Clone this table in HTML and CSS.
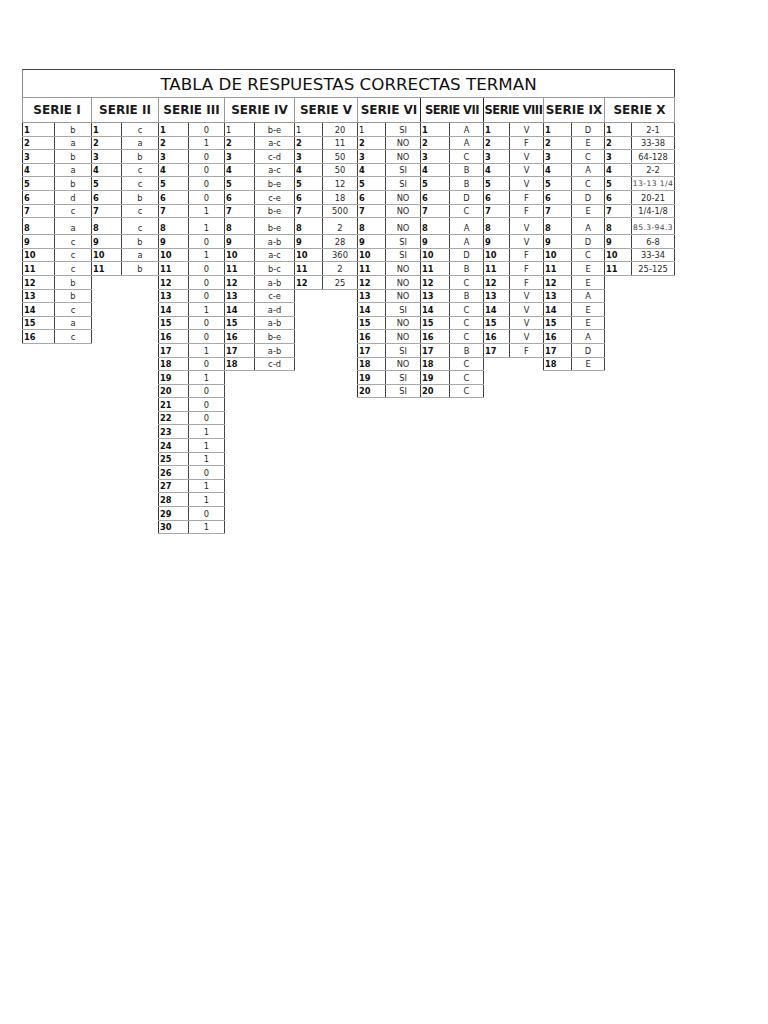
FILE: index.html
```html
<!DOCTYPE html>
<html lang="es">
<head>
<meta charset="utf-8">
<title>Tabla de respuestas correctas Terman</title>
<link rel="stylesheet" href="styles.css">
</head>
<body>
<table class="sheet">
<colgroup>
<col class="w32"><col class="w37">
<col class="w30"><col class="w37">
<col class="w30"><col class="w36">
<col class="w30"><col class="w40">
<col class="w28"><col class="w35">
<col class="w28"><col class="w35">
<col class="w29"><col class="w34">
<col class="w26"><col class="w34">
<col class="w28"><col class="w33">
<col class="w27"><col class="w43">
</colgroup>
<tr><td class="title" colspan="20">TABLA DE RESPUESTAS CORRECTAS TERMAN</td></tr>
<tr class="hd">
<th colspan="2">SERIE I</th><th colspan="2">SERIE II</th><th colspan="2">SERIE III</th><th colspan="2">SERIE IV</th><th colspan="2">SERIE V</th><th colspan="2" class="dk">SERIE VI</th><th colspan="2" class="dk tight">SERIE VII</th><th colspan="2" class="tight">SERIE VIII</th><th colspan="2">SERIE IX</th><th colspan="2">SERIE X</th>
</tr>
<tr class="r"><td class="n">1</td><td class="v">b</td><td class="n">1</td><td class="v">c</td><td class="n">1</td><td class="v">0</td><td class="n l">1</td><td class="v">b-e</td><td class="n l">1</td><td class="v">20</td><td class="n l">1</td><td class="v">SI</td><td class="n">1</td><td class="v">A</td><td class="n">1</td><td class="v">V</td><td class="n">1</td><td class="v">D</td><td class="n">1</td><td class="v">2-1</td></tr>
<tr class="r"><td class="n">2</td><td class="v">a</td><td class="n">2</td><td class="v">a</td><td class="n">2</td><td class="v">1</td><td class="n">2</td><td class="v">a-c</td><td class="n">2</td><td class="v">11</td><td class="n">2</td><td class="v">NO</td><td class="n">2</td><td class="v">A</td><td class="n">2</td><td class="v">F</td><td class="n">2</td><td class="v">E</td><td class="n">2</td><td class="v">33-38</td></tr>
<tr class="r"><td class="n">3</td><td class="v">b</td><td class="n">3</td><td class="v">b</td><td class="n">3</td><td class="v">0</td><td class="n">3</td><td class="v">c-d</td><td class="n">3</td><td class="v">50</td><td class="n">3</td><td class="v">NO</td><td class="n">3</td><td class="v">C</td><td class="n">3</td><td class="v">V</td><td class="n">3</td><td class="v">C</td><td class="n">3</td><td class="v">64-128</td></tr>
<tr class="r"><td class="n">4</td><td class="v">a</td><td class="n">4</td><td class="v">c</td><td class="n">4</td><td class="v">0</td><td class="n">4</td><td class="v">a-c</td><td class="n">4</td><td class="v">50</td><td class="n">4</td><td class="v">SI</td><td class="n">4</td><td class="v">B</td><td class="n">4</td><td class="v">V</td><td class="n">4</td><td class="v">A</td><td class="n">4</td><td class="v">2-2</td></tr>
<tr class="r"><td class="n">5</td><td class="v">b</td><td class="n">5</td><td class="v">c</td><td class="n">5</td><td class="v">0</td><td class="n">5</td><td class="v">b-e</td><td class="n">5</td><td class="v">12</td><td class="n">5</td><td class="v">SI</td><td class="n">5</td><td class="v">B</td><td class="n">5</td><td class="v">V</td><td class="n">5</td><td class="v">C</td><td class="n">5</td><td class="v sm">13-13 1/4</td></tr>
<tr class="r"><td class="n">6</td><td class="v">d</td><td class="n">6</td><td class="v">b</td><td class="n">6</td><td class="v">0</td><td class="n">6</td><td class="v">c-e</td><td class="n">6</td><td class="v">18</td><td class="n">6</td><td class="v">NO</td><td class="n">6</td><td class="v">D</td><td class="n">6</td><td class="v">F</td><td class="n">6</td><td class="v">D</td><td class="n">6</td><td class="v">20-21</td></tr>
<tr class="r"><td class="n">7</td><td class="v">c</td><td class="n">7</td><td class="v">c</td><td class="n">7</td><td class="v">1</td><td class="n">7</td><td class="v">b-e</td><td class="n">7</td><td class="v">500</td><td class="n">7</td><td class="v">NO</td><td class="n">7</td><td class="v">C</td><td class="n">7</td><td class="v">F</td><td class="n">7</td><td class="v">E</td><td class="n">7</td><td class="v">1/4-1/8</td></tr>
<tr class="r tall"><td class="n">8</td><td class="v">a</td><td class="n">8</td><td class="v">c</td><td class="n">8</td><td class="v">1</td><td class="n">8</td><td class="v">b-e</td><td class="n">8</td><td class="v">2</td><td class="n">8</td><td class="v">NO</td><td class="n">8</td><td class="v">A</td><td class="n">8</td><td class="v">V</td><td class="n">8</td><td class="v">A</td><td class="n">8</td><td class="v sm">85.3-94.3</td></tr>
<tr class="r"><td class="n">9</td><td class="v">c</td><td class="n">9</td><td class="v">b</td><td class="n">9</td><td class="v">0</td><td class="n">9</td><td class="v">a-b</td><td class="n">9</td><td class="v">28</td><td class="n">9</td><td class="v">SI</td><td class="n">9</td><td class="v">A</td><td class="n">9</td><td class="v">V</td><td class="n">9</td><td class="v">D</td><td class="n">9</td><td class="v">6-8</td></tr>
<tr class="r"><td class="n">10</td><td class="v">c</td><td class="n">10</td><td class="v">a</td><td class="n">10</td><td class="v">1</td><td class="n">10</td><td class="v">a-c</td><td class="n">10</td><td class="v">360</td><td class="n">10</td><td class="v">SI</td><td class="n">10</td><td class="v">D</td><td class="n">10</td><td class="v">F</td><td class="n">10</td><td class="v">C</td><td class="n">10</td><td class="v">33-34</td></tr>
<tr class="r"><td class="n">11</td><td class="v">c</td><td class="n">11</td><td class="v">b</td><td class="n">11</td><td class="v">0</td><td class="n">11</td><td class="v">b-c</td><td class="n">11</td><td class="v">2</td><td class="n">11</td><td class="v">NO</td><td class="n">11</td><td class="v">B</td><td class="n">11</td><td class="v">F</td><td class="n">11</td><td class="v">E</td><td class="n">11</td><td class="v">25-125</td></tr>
<tr class="r"><td class="n">12</td><td class="v">b</td><td colspan="2"></td><td class="n">12</td><td class="v">0</td><td class="n">12</td><td class="v">a-b</td><td class="n">12</td><td class="v">25</td><td class="n">12</td><td class="v">NO</td><td class="n">12</td><td class="v">C</td><td class="n">12</td><td class="v">F</td><td class="n">12</td><td class="v">E</td><td colspan="2"></td></tr>
<tr class="r"><td class="n">13</td><td class="v">b</td><td colspan="2"></td><td class="n">13</td><td class="v">0</td><td class="n">13</td><td class="v">c-e</td><td colspan="2"></td><td class="n">13</td><td class="v">NO</td><td class="n">13</td><td class="v">B</td><td class="n">13</td><td class="v">V</td><td class="n">13</td><td class="v">A</td><td colspan="2"></td></tr>
<tr class="r"><td class="n">14</td><td class="v">c</td><td colspan="2"></td><td class="n">14</td><td class="v">1</td><td class="n">14</td><td class="v">a-d</td><td colspan="2"></td><td class="n">14</td><td class="v">SI</td><td class="n">14</td><td class="v">C</td><td class="n">14</td><td class="v">V</td><td class="n">14</td><td class="v">E</td><td colspan="2"></td></tr>
<tr class="r"><td class="n">15</td><td class="v">a</td><td colspan="2"></td><td class="n">15</td><td class="v">0</td><td class="n">15</td><td class="v">a-b</td><td colspan="2"></td><td class="n">15</td><td class="v">NO</td><td class="n">15</td><td class="v">C</td><td class="n">15</td><td class="v">V</td><td class="n">15</td><td class="v">E</td><td colspan="2"></td></tr>
<tr class="r"><td class="n">16</td><td class="v">c</td><td colspan="2"></td><td class="n">16</td><td class="v">0</td><td class="n">16</td><td class="v">b-e</td><td colspan="2"></td><td class="n">16</td><td class="v">NO</td><td class="n">16</td><td class="v">C</td><td class="n">16</td><td class="v">V</td><td class="n">16</td><td class="v">A</td><td colspan="2"></td></tr>
<tr class="r"><td colspan="4"></td><td class="n">17</td><td class="v">1</td><td class="n">17</td><td class="v">a-b</td><td colspan="2"></td><td class="n">17</td><td class="v">SI</td><td class="n">17</td><td class="v">B</td><td class="n">17</td><td class="v">F</td><td class="n">17</td><td class="v">D</td><td colspan="2"></td></tr>
<tr class="r"><td colspan="4"></td><td class="n">18</td><td class="v">0</td><td class="n">18</td><td class="v">c-d</td><td colspan="2"></td><td class="n">18</td><td class="v">NO</td><td class="n">18</td><td class="v">C</td><td colspan="2"></td><td class="n">18</td><td class="v">E</td><td colspan="2"></td></tr>
<tr class="r"><td colspan="4"></td><td class="n">19</td><td class="v">1</td><td colspan="4"></td><td class="n">19</td><td class="v">SI</td><td class="n">19</td><td class="v">C</td><td colspan="6"></td></tr>
<tr class="r"><td colspan="4"></td><td class="n">20</td><td class="v">0</td><td colspan="4"></td><td class="n">20</td><td class="v">SI</td><td class="n">20</td><td class="v">C</td><td colspan="6"></td></tr>
<tr class="r"><td colspan="4"></td><td class="n">21</td><td class="v">0</td><td colspan="14"></td></tr>
<tr class="r"><td colspan="4"></td><td class="n">22</td><td class="v">0</td><td colspan="14"></td></tr>
<tr class="r"><td colspan="4"></td><td class="n">23</td><td class="v">1</td><td colspan="14"></td></tr>
<tr class="r"><td colspan="4"></td><td class="n">24</td><td class="v">1</td><td colspan="14"></td></tr>
<tr class="r"><td colspan="4"></td><td class="n">25</td><td class="v">1</td><td colspan="14"></td></tr>
<tr class="r"><td colspan="4"></td><td class="n">26</td><td class="v">0</td><td colspan="14"></td></tr>
<tr class="r"><td colspan="4"></td><td class="n">27</td><td class="v">1</td><td colspan="14"></td></tr>
<tr class="r"><td colspan="4"></td><td class="n">28</td><td class="v">1</td><td colspan="14"></td></tr>
<tr class="r"><td colspan="4"></td><td class="n">29</td><td class="v">0</td><td colspan="14"></td></tr>
<tr class="r"><td colspan="4"></td><td class="n">30</td><td class="v">1</td><td colspan="14"></td></tr>
</table>
</body>
</html>
```

FILE: styles.css
```css
html, body {
  margin: 0;
  padding: 0;
  background: #ffffff;
}

body {
  font-family: "DejaVu Sans", "Liberation Sans", sans-serif;
  color: #222222;
}

.sheet {
  border-collapse: collapse;
  table-layout: fixed;
  width: 652px;
  margin: 69px 0 0 22px;
}

.w26 { width: 26px; }
.w27 { width: 27px; }
.w28 { width: 28px; }
.w29 { width: 29px; }
.w30 { width: 30px; }
.w32 { width: 32px; }
.w33 { width: 33px; }
.w34 { width: 34px; }
.w35 { width: 35px; }
.w36 { width: 36px; }
.w37 { width: 37px; }
.w40 { width: 40px; }
.w43 { width: 43px; }

td, th {
  padding: 0;
}

.title {
  height: 26px;
  border: 1px solid #444444;
  border-left-color: #888888;
  border-bottom-color: #999999;
  font-size: 16.7px;
  font-weight: normal;
  text-align: center;
  vertical-align: middle;
  color: #111111;
  line-height: 20px;
  padding-top: 1px;
}

.hd th {
  height: 24px;
  border: 1px solid #9a9a9a;
  font-size: 12px;
  font-weight: bold;
  color: #1a1a1a;
  white-space: nowrap;
  overflow: hidden;
  text-align: center;
  vertical-align: middle;
  line-height: 14px;
}

.hd th.dk {
  border-right-color: #222222;
}

.hd th.tight {
  font-size: 11.5px;
  letter-spacing: -0.5px;
  overflow: visible;
}

.r {
  height: 13.6px;
}

.r.tall {
  height: 17px;
}

.n,
.v {
  border-top: 1px solid #a8a8a8;
  border-bottom: 1px solid #a8a8a8;
  border-left: 1px solid #333333;
  border-right: 1px solid #444444;
  font-size: 8.3px;
  line-height: 10px;
  vertical-align: bottom;
  padding-bottom: 1px;
  white-space: nowrap;
  overflow: hidden;
}

.n {
  font-weight: bold;
  text-align: left;
  padding-left: 1px;
  color: #111111;
}

.n.l {
  font-weight: normal;
}

.v {
  text-align: center;
  color: #2a2a2a;
}

.v.sm {
  font-size: 7.6px;
  letter-spacing: 0.4px;
  color: #444444;
}
```
